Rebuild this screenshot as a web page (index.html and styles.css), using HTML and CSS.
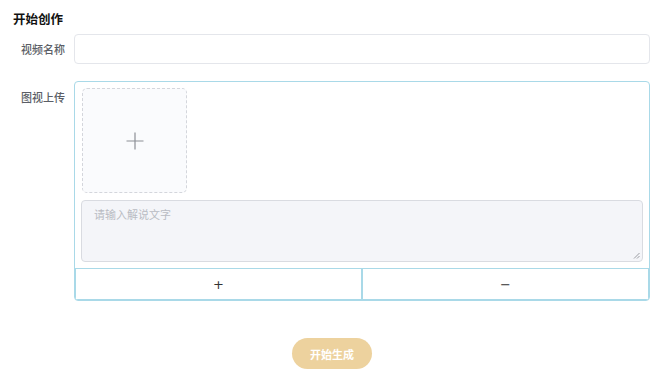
FILE: index.html
```html
<!DOCTYPE html>
<html lang="zh">
<head>
<meta charset="utf-8">
<title>开始创作</title>
<link rel="stylesheet" href="styles.css">
</head>
<body>
<div class="page">
  <div class="title">开始创作</div>
  <div class="row row-name">
    <div class="label">视频名称</div>
    <div class="field"><div class="input"></div></div>
  </div>
  <div class="row row-upload">
    <div class="label label-upload">图视上传</div>
    <div class="field">
      <div class="panel">
        <div class="panel-body">
          <div class="uploader">
            <svg width="18" height="18" viewBox="0 0 18 18"><path d="M9 0.5V17.5M0.5 9H17.5" stroke="#8c8f96" stroke-width="1.2" fill="none"/></svg>
          </div>
          <div class="textarea">
            <span class="placeholder">请输入解说文字</span>
            <svg class="grip" width="7" height="7" viewBox="0 0 7 7"><path d="M6.5 1L1 6.5M6.5 4L4 6.5" stroke="#9a9ca2" stroke-width="1" fill="none"/></svg>
          </div>
        </div>
        <div class="actions">
          <div class="act">+</div>
          <div class="act">−</div>
        </div>
      </div>
    </div>
  </div>
  <div class="submit-row">
    <div class="submit">开始生成</div>
  </div>
</div>
</body>
</html>
```
FILE: styles.css
```css
* { box-sizing: border-box; }
html, body { margin: 0; padding: 0; background: #fff; }
body {
  font-family: "Noto Sans CJK SC", "Noto Sans", sans-serif;
  color: #606266;
  width: 658px;
  height: 380px;
  overflow: hidden;
}
.page { padding: 10px 8px 0 0; }
.title {
  padding-left: 13px;
  font-size: 12.5px;
  font-weight: bold;
  color: #111;
  line-height: 18px;
}
.row { display: flex; align-items: flex-start; }
.row-name { margin-top: 6px; align-items: center; }
.row-upload { margin-top: 17px; }
.label {
  width: 74px;
  padding-right: 9px;
  text-align: right;
  font-size: 11px;
  font-weight: 500;
  line-height: 16px;
  color: #5b5e66;
  flex-shrink: 0;
}
.label-upload { padding-top: 8px; }
.field { flex: 1; }
.input {
  height: 30px;
  border: 1px solid #e4e6eb;
  border-radius: 4px;
  background: #fff;
}
.panel {
  border: 1px solid #a9d9e8;
  border-radius: 4px;
  overflow: hidden;
}
.panel-body {
  padding: 6px 6px 6px 6px;
}
.uploader {
  width: 105px;
  height: 105px;
  border: 1px dashed #d4d6dc;
  border-radius: 5px;
  background: #fafbfd;
  display: flex;
  align-items: center;
  justify-content: center;
  margin-left: 1px;
}
.textarea {
  position: relative;
  margin-top: 7px;
  height: 62px;
  border: 1px solid #d9dbe1;
  border-radius: 4px;
  background: #f4f5f9;
  padding: 5px 12px;
  font-size: 11px;
  line-height: 16px;
}
.placeholder {
  color: #b9bcc3;
}
.grip { position: absolute; right: 2px; bottom: 2px; }
.actions { display: flex; }
.act {
  flex: 1;
  height: 32px;
  border: 1px solid #a9d9e8;
  display: flex;
  align-items: center;
  justify-content: center;
  font-family: "DejaVu Sans", sans-serif;
  font-size: 13px;
  color: #333;
}
.submit-row {
  display: flex;
  justify-content: center;
  padding-left: 14px;
  margin-top: 37px;
}
.submit {
  width: 80px;
  height: 31px;
  border-radius: 16px;
  background: #edd29e;
  color: #fff;
  font-size: 11px;
  font-weight: 600;
  display: flex;
  align-items: center;
  justify-content: center;
}
```
